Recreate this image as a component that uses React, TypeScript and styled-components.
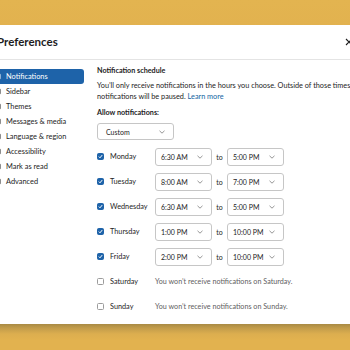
import styled, { createGlobalStyle } from 'styled-components';

const GlobalStyle = createGlobalStyle`
  html, body {
    margin: 0;
    padding: 0;
  }
  body {
    width: 350px;
    height: 350px;
    overflow: hidden;
    background: #e2b24f;
    font-family: Lato, 'Open Sans', sans-serif;
    color: #1d1c1d;
  }
`;

const Page = styled.div`
  width: 350px;
  height: 350px;
  overflow: hidden;
  display: flex;
  flex-direction: column;
  background: #e2b24f;
`;

const TopBand = styled.div`
  flex: none;
  height: 25px;
  background: linear-gradient(#e3b450, #e2b24f);
`;

const BottomBand = styled.div`
  flex: 1;
  background: linear-gradient(#a98a45 0, #c29c4b 4px, #dcae4f 10px, #e2b24f 16px);
`;

const Modal = styled.div`
  flex: none;
  height: 299px;
  width: 380px;
  margin-left: -12px;
  background: #fff;
  display: flex;
  flex-direction: column;
`;

const Header = styled.div`
  flex: none;
  height: 35px;
  box-sizing: border-box;
  border-bottom: 1px solid #e4e4e4;
  display: flex;
  align-items: center;
  justify-content: space-between;
  padding: 0 22px 1px 10px;
`;

const Title = styled.div`
  font-size: 11.5px;
  font-weight: 700;
  margin-left: -1px;
`;

const CloseButton = styled.div`
  width: 8px;
  height: 8px;
  display: flex;
  margin-right: -7px;
`;

const Body = styled.div`
  flex: 1;
  display: flex;
  gap: 13px;
`;

const Sidebar = styled.div`
  width: 96px;
  flex: none;
  padding-top: 9px;
  display: flex;
  flex-direction: column;
`;

const NavItem = styled.div<{ $active?: boolean }>`
  height: 15px;
  display: flex;
  align-items: center;
  gap: 5px;
  padding-left: 4px;
  border-radius: 3px;
  font-size: 7.4px;
  color: ${(p) => (p.$active ? '#fff' : '#1d1c1d')};
  background: ${(p) => (p.$active ? '#1e63a9' : 'transparent')};
`;

const NavIcon = styled.svg`
  width: 9px;
  height: 9px;
  flex: none;
`;

const Content = styled.div`
  flex: 1;
  padding-top: 5px;
  display: flex;
  flex-direction: column;
  align-items: flex-start;
`;

const SectionTitle = styled.div<{ $top?: number }>`
  font-size: 7.2px;
  font-weight: 700;
  line-height: 12px;
  margin-top: ${(p) => p.$top ?? 0}px;
`;

const Paragraph = styled.p`
  margin: 3px 0 0;
  font-size: 7.3px;
  line-height: 11px;
  white-space: nowrap;
`;

const Link = styled.span`
  color: #1264a3;
`;

const Select = styled.div<{ $width: number }>`
  box-sizing: border-box;
  width: ${(p) => p.$width}px;
  height: 18px;
  border: 1px solid #c6c6c6;
  border-radius: 3px;
  display: flex;
  align-items: center;
  justify-content: space-between;
  padding: 0 8px 0 5px;
  font-size: 7px;
  color: #1d1c1d;
`;

const CustomSelect = styled(Select)`
  height: 17px;
  margin-top: 4px;
  padding-left: 8px;
`;

const Schedule = styled.div`
  margin-top: 4px;
  display: flex;
  flex-direction: column;
`;

const DayRow = styled.div`
  height: 25px;
  display: grid;
  grid-template-columns: 13px 45px 57px 15px 57px;
  align-items: center;
  font-size: 7.3px;
`;

const Box = styled.div<{ $checked: boolean }>`
  box-sizing: border-box;
  width: 7px;
  height: 7px;
  border-radius: 1.5px;
  border: 1px solid ${(p) => (p.$checked ? '#1e63a9' : '#9c9c9c')};
  background: ${(p) => (p.$checked ? '#1e63a9' : '#fff')};
  display: flex;
  align-items: center;
  justify-content: center;
`;

const To = styled.span`
  text-align: center;
  color: #1d1c1d;
  font-size: 7px;
`;

const OffNote = styled.span`
  grid-column: 3 / 6;
  color: #616061;
  font-size: 7.2px;
  white-space: nowrap;
`;

const Chevron = () => (
  <svg width="6" height="4" viewBox="0 0 6 4">
    <polyline points="0.5,0.8 3,3.2 5.5,0.8" fill="none" stroke="#7a7a7a" strokeWidth="0.8" />
  </svg>
);

const Check = () => (
  <svg width="5" height="5" viewBox="0 0 5 5">
    <polyline points="0.8,2.6 2,3.8 4.2,1.1" fill="none" stroke="#fff" strokeWidth="1" />
  </svg>
);

const navItems = [
  'Notifications',
  'Sidebar',
  'Themes',
  'Messages & media',
  'Language & region',
  'Accessibility',
  'Mark as read',
  'Advanced',
];

const days = [
  { day: 'Monday', from: '6:30 AM', to: '5:00 PM', on: true },
  { day: 'Tuesday', from: '8:00 AM', to: '7:00 PM', on: true },
  { day: 'Wednesday', from: '6:30 AM', to: '5:00 PM', on: true },
  { day: 'Thursday', from: '1:00 PM', to: '10:00 PM', on: true },
  { day: 'Friday', from: '2:00 PM', to: '10:00 PM', on: true },
  { day: 'Saturday', from: '', to: '', on: false },
  { day: 'Sunday', from: '', to: '', on: false },
];

export default function App() {
  return (
    <Page>
      <GlobalStyle />
      <TopBand />
      <Modal>
        <Header>
          <Title>Preferences</Title>
          <CloseButton>
            <svg width="8" height="8" viewBox="0 0 8 8">
              <path d="M1 1L7 7M7 1L1 7" stroke="#1d1c1d" strokeWidth="1.1" />
            </svg>
          </CloseButton>
        </Header>
        <Body>
          <Sidebar>
            {navItems.map((item, i) => (
              <NavItem key={item} $active={i === 0}>
                <NavIcon viewBox="0 0 9 9">
                  <rect
                    x="1"
                    y="1.5"
                    width="7"
                    height="6"
                    rx="1"
                    fill="none"
                    stroke={i === 0 ? '#fff' : '#1d1c1d'}
                    strokeWidth="1"
                  />
                </NavIcon>
                {item}
              </NavItem>
            ))}
          </Sidebar>
          <Content>
            <SectionTitle>Notification schedule</SectionTitle>
            <Paragraph>
              You’ll only receive notifications in the hours you choose. Outside of those times,
              <br />
              notifications will be paused. <Link>Learn more</Link>
            </Paragraph>
            <SectionTitle $top={5}>Allow notifications:</SectionTitle>
            <CustomSelect $width={77}>
              Custom
              <Chevron />
            </CustomSelect>
            <Schedule>
              {days.map((d) => (
                <DayRow key={d.day}>
                  <Box $checked={d.on}>{d.on && <Check />}</Box>
                  <span>{d.day}</span>
                  {d.on ? (
                    <>
                      <Select $width={57}>
                        {d.from}
                        <Chevron />
                      </Select>
                      <To>to</To>
                      <Select $width={57}>
                        {d.to}
                        <Chevron />
                      </Select>
                    </>
                  ) : (
                    <OffNote>You won’t receive notifications on {d.day}.</OffNote>
                  )}
                </DayRow>
              ))}
            </Schedule>
          </Content>
        </Body>
      </Modal>
      <BottomBand />
    </Page>
  );
}
